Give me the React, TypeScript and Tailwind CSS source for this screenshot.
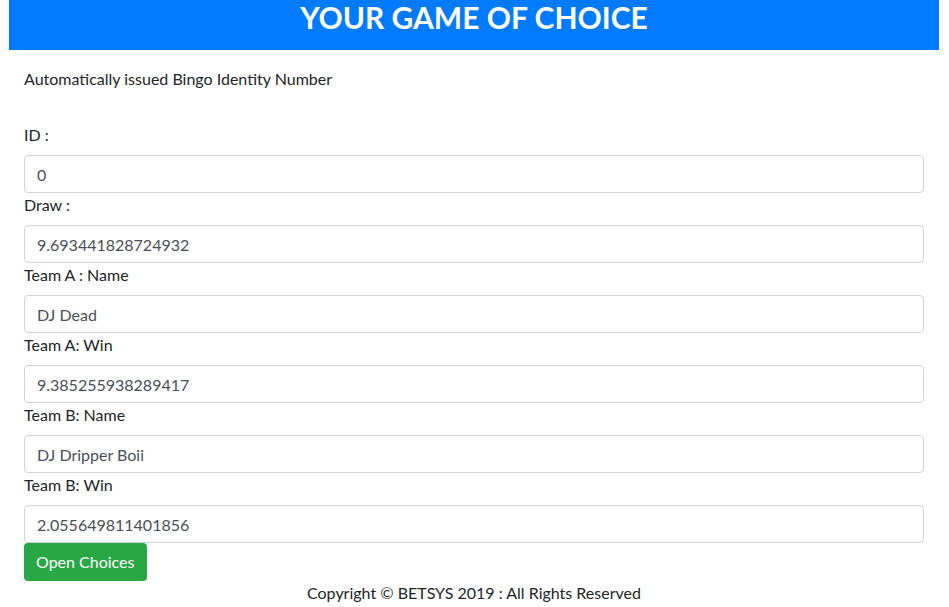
import React from "react";

const fields = [
  { label: "ID :", value: "0" },
  { label: "Draw :", value: "9.693441828724932" },
  { label: "Team A : Name", value: "DJ Dead" },
  { label: "Team A: Win", value: "9.385255938289417" },
  { label: "Team B: Name", value: "DJ Dripper Boii" },
  { label: "Team B: Win", value: "2.055649811401856" },
];

export default function App() {
  return (
    <div className="min-h-[607px] bg-white font-['Lato',sans-serif] text-[16px] text-[#212529]">
      <div className="ml-[9px] w-[930px]">
        <div className="h-[50px] bg-[#007bff] flex justify-center">
          <h1 className="text-[30px] font-bold leading-[34px] text-white">
            YOUR GAME OF CHOICE
          </h1>
        </div>
        <div className="pl-[15px] pr-[15px]">
          <p className="mt-[17px] leading-[24px]">
            Automatically issued Bingo Identity Number
          </p>
          <form className="mt-[32px]">
            {fields.map((f) => (
              <div key={f.label}>
                <label className="block leading-[24px] mb-[8px]">{f.label}</label>
                <input
                  readOnly
                  value={f.value}
                  className="block w-full h-[38px] px-[12px] border border-[#ced4da] rounded-[4px] text-[#495057] leading-[24px] outline-none"
                />
              </div>
            ))}
            <button
              type="button"
              className="block h-[38px] px-[12px] bg-[#28a745] text-white rounded-[4px] leading-[24px]"
            >
              Open Choices
            </button>
          </form>
          <p className="text-center leading-[24px]">
            Copyright © BETSYS 2019 : All Rights Reserved
          </p>
        </div>
      </div>
    </div>
  );
}
